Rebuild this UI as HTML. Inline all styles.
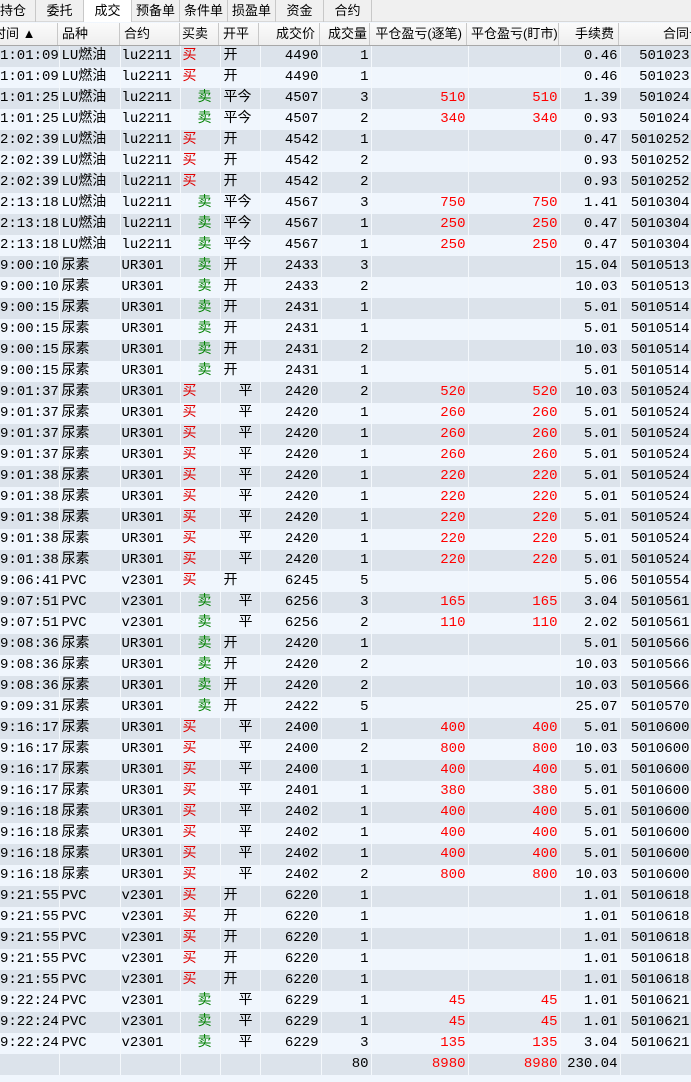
<!DOCTYPE html>
<html><head><meta charset="utf-8"><style>
*{margin:0;padding:0;box-sizing:border-box}
body{width:691px;height:1082px;overflow:hidden;background:#f0f6fd;font-family:"Liberation Mono","Noto Sans CJK SC",monospace;font-size:14px;color:#000;position:relative}
.tabs{position:absolute;left:0;top:0;width:691px;height:22px;background:#f0f0f0;border-bottom:1px solid #d8d8d8}
.tab{position:absolute;top:0;height:22px;line-height:22px;text-align:center;font-family:"Liberation Sans","Noto Sans CJK SC",sans-serif;font-size:13px;border-right:1px solid #c8c8c8;color:#000}
.tab.sel{background:#fff}
.hdr{position:absolute;left:0;top:23px;width:691px;height:23px;background:linear-gradient(#fbfbfb,#eeeeee);border-bottom:1px solid #a8a8a8}
.h{position:absolute;top:0;height:22px;line-height:22px;font-family:"Liberation Sans","Noto Sans CJK SC",sans-serif;font-size:13px;border-right:1px solid #c8c8c8;white-space:nowrap;overflow:hidden;padding:0 4px}
.r{text-align:right}
table{position:absolute;left:0;top:46px;border-collapse:collapse;table-layout:fixed;width:691px}
td{height:21px;line-height:21px;padding:0 2px;border-right:1px solid #f4f8fc;white-space:nowrap;overflow:hidden}
tr:nth-child(odd) td{background:#dce3eb}
tr:nth-child(even) td{background:#f0f6fd}
td:nth-child(1){padding:0 0 0 0;text-align:right;padding-right:1px}
td:nth-child(3){padding-left:1px}
td:nth-child(6),td:nth-child(7),td:nth-child(8),td:nth-child(9),td:nth-child(10),td:nth-child(11){text-align:right}
td:nth-child(11){padding-right:1px}
.b{color:#e00000;padding-left:2px}
.s{color:#008000;padding-left:17px}
.k{padding-left:3px}
.p{padding-left:18px}
.red{color:#f00}
</style></head><body>
<div class="tabs">
<div class="tab" style="left:0;width:36px;text-align:left">持仓</div>
<div class="tab" style="left:36px;width:48px">委托</div>
<div class="tab sel" style="left:84px;width:48px">成交</div>
<div class="tab" style="left:132px;width:48px">预备单</div>
<div class="tab" style="left:180px;width:48px">条件单</div>
<div class="tab" style="left:228px;width:48px">损盈单</div>
<div class="tab" style="left:276px;width:48px">资金</div>
<div class="tab" style="left:324px;width:48px">合约</div>
</div>
<div class="hdr">
<div class="h" style="left:0;width:58px;padding-left:0;text-indent:-7px">时间 ▲</div>
<div class="h" style="left:58px;width:62px">品种</div>
<div class="h" style="left:120px;width:60px">合约</div>
<div class="h" style="left:180px;width:39px;padding:0 2px">买卖</div>
<div class="h" style="left:219px;width:40px">开平</div>
<div class="h r" style="left:259px;width:61px">成交价</div>
<div class="h r" style="left:320px;width:50px;padding:0 2px">成交量</div>
<div class="h r" style="left:370px;width:97px">平仓盈亏(逐笔)</div>
<div class="h r" style="left:467px;width:92px">平仓盈亏(盯市)</div>
<div class="h r" style="left:559px;width:60px">手续费</div>
<div class="h" style="left:619px;width:72px;padding-left:44px;border:none">合同号</div>
</div>
<table>
<colgroup><col style="width:59px"><col style="width:61px"><col style="width:60px"><col style="width:40px"><col style="width:40px"><col style="width:61px"><col style="width:50px"><col style="width:97px"><col style="width:92px"><col style="width:60px"><col style="width:71px"></colgroup>
<tr><td>1:01:09</td><td>LU燃油</td><td>lu2211</td><td class="b">买</td><td class="k">开</td><td>4490</td><td>1</td><td></td><td></td><td>0.46</td><td>501023</td></tr>
<tr><td>1:01:09</td><td>LU燃油</td><td>lu2211</td><td class="b">买</td><td class="k">开</td><td>4490</td><td>1</td><td></td><td></td><td>0.46</td><td>501023</td></tr>
<tr><td>1:01:25</td><td>LU燃油</td><td>lu2211</td><td class="s">卖</td><td class="k">平今</td><td>4507</td><td>3</td><td class="red">510</td><td class="red">510</td><td>1.39</td><td>501024</td></tr>
<tr><td>1:01:25</td><td>LU燃油</td><td>lu2211</td><td class="s">卖</td><td class="k">平今</td><td>4507</td><td>2</td><td class="red">340</td><td class="red">340</td><td>0.93</td><td>501024</td></tr>
<tr><td>2:02:39</td><td>LU燃油</td><td>lu2211</td><td class="b">买</td><td class="k">开</td><td>4542</td><td>1</td><td></td><td></td><td>0.47</td><td>5010252</td></tr>
<tr><td>2:02:39</td><td>LU燃油</td><td>lu2211</td><td class="b">买</td><td class="k">开</td><td>4542</td><td>2</td><td></td><td></td><td>0.93</td><td>5010252</td></tr>
<tr><td>2:02:39</td><td>LU燃油</td><td>lu2211</td><td class="b">买</td><td class="k">开</td><td>4542</td><td>2</td><td></td><td></td><td>0.93</td><td>5010252</td></tr>
<tr><td>2:13:18</td><td>LU燃油</td><td>lu2211</td><td class="s">卖</td><td class="k">平今</td><td>4567</td><td>3</td><td class="red">750</td><td class="red">750</td><td>1.41</td><td>5010304</td></tr>
<tr><td>2:13:18</td><td>LU燃油</td><td>lu2211</td><td class="s">卖</td><td class="k">平今</td><td>4567</td><td>1</td><td class="red">250</td><td class="red">250</td><td>0.47</td><td>5010304</td></tr>
<tr><td>2:13:18</td><td>LU燃油</td><td>lu2211</td><td class="s">卖</td><td class="k">平今</td><td>4567</td><td>1</td><td class="red">250</td><td class="red">250</td><td>0.47</td><td>5010304</td></tr>
<tr><td>9:00:10</td><td>尿素</td><td>UR301</td><td class="s">卖</td><td class="k">开</td><td>2433</td><td>3</td><td></td><td></td><td>15.04</td><td>5010513</td></tr>
<tr><td>9:00:10</td><td>尿素</td><td>UR301</td><td class="s">卖</td><td class="k">开</td><td>2433</td><td>2</td><td></td><td></td><td>10.03</td><td>5010513</td></tr>
<tr><td>9:00:15</td><td>尿素</td><td>UR301</td><td class="s">卖</td><td class="k">开</td><td>2431</td><td>1</td><td></td><td></td><td>5.01</td><td>5010514</td></tr>
<tr><td>9:00:15</td><td>尿素</td><td>UR301</td><td class="s">卖</td><td class="k">开</td><td>2431</td><td>1</td><td></td><td></td><td>5.01</td><td>5010514</td></tr>
<tr><td>9:00:15</td><td>尿素</td><td>UR301</td><td class="s">卖</td><td class="k">开</td><td>2431</td><td>2</td><td></td><td></td><td>10.03</td><td>5010514</td></tr>
<tr><td>9:00:15</td><td>尿素</td><td>UR301</td><td class="s">卖</td><td class="k">开</td><td>2431</td><td>1</td><td></td><td></td><td>5.01</td><td>5010514</td></tr>
<tr><td>9:01:37</td><td>尿素</td><td>UR301</td><td class="b">买</td><td class="p">平</td><td>2420</td><td>2</td><td class="red">520</td><td class="red">520</td><td>10.03</td><td>5010524</td></tr>
<tr><td>9:01:37</td><td>尿素</td><td>UR301</td><td class="b">买</td><td class="p">平</td><td>2420</td><td>1</td><td class="red">260</td><td class="red">260</td><td>5.01</td><td>5010524</td></tr>
<tr><td>9:01:37</td><td>尿素</td><td>UR301</td><td class="b">买</td><td class="p">平</td><td>2420</td><td>1</td><td class="red">260</td><td class="red">260</td><td>5.01</td><td>5010524</td></tr>
<tr><td>9:01:37</td><td>尿素</td><td>UR301</td><td class="b">买</td><td class="p">平</td><td>2420</td><td>1</td><td class="red">260</td><td class="red">260</td><td>5.01</td><td>5010524</td></tr>
<tr><td>9:01:38</td><td>尿素</td><td>UR301</td><td class="b">买</td><td class="p">平</td><td>2420</td><td>1</td><td class="red">220</td><td class="red">220</td><td>5.01</td><td>5010524</td></tr>
<tr><td>9:01:38</td><td>尿素</td><td>UR301</td><td class="b">买</td><td class="p">平</td><td>2420</td><td>1</td><td class="red">220</td><td class="red">220</td><td>5.01</td><td>5010524</td></tr>
<tr><td>9:01:38</td><td>尿素</td><td>UR301</td><td class="b">买</td><td class="p">平</td><td>2420</td><td>1</td><td class="red">220</td><td class="red">220</td><td>5.01</td><td>5010524</td></tr>
<tr><td>9:01:38</td><td>尿素</td><td>UR301</td><td class="b">买</td><td class="p">平</td><td>2420</td><td>1</td><td class="red">220</td><td class="red">220</td><td>5.01</td><td>5010524</td></tr>
<tr><td>9:01:38</td><td>尿素</td><td>UR301</td><td class="b">买</td><td class="p">平</td><td>2420</td><td>1</td><td class="red">220</td><td class="red">220</td><td>5.01</td><td>5010524</td></tr>
<tr><td>9:06:41</td><td>PVC</td><td>v2301</td><td class="b">买</td><td class="k">开</td><td>6245</td><td>5</td><td></td><td></td><td>5.06</td><td>5010554</td></tr>
<tr><td>9:07:51</td><td>PVC</td><td>v2301</td><td class="s">卖</td><td class="p">平</td><td>6256</td><td>3</td><td class="red">165</td><td class="red">165</td><td>3.04</td><td>5010561</td></tr>
<tr><td>9:07:51</td><td>PVC</td><td>v2301</td><td class="s">卖</td><td class="p">平</td><td>6256</td><td>2</td><td class="red">110</td><td class="red">110</td><td>2.02</td><td>5010561</td></tr>
<tr><td>9:08:36</td><td>尿素</td><td>UR301</td><td class="s">卖</td><td class="k">开</td><td>2420</td><td>1</td><td></td><td></td><td>5.01</td><td>5010566</td></tr>
<tr><td>9:08:36</td><td>尿素</td><td>UR301</td><td class="s">卖</td><td class="k">开</td><td>2420</td><td>2</td><td></td><td></td><td>10.03</td><td>5010566</td></tr>
<tr><td>9:08:36</td><td>尿素</td><td>UR301</td><td class="s">卖</td><td class="k">开</td><td>2420</td><td>2</td><td></td><td></td><td>10.03</td><td>5010566</td></tr>
<tr><td>9:09:31</td><td>尿素</td><td>UR301</td><td class="s">卖</td><td class="k">开</td><td>2422</td><td>5</td><td></td><td></td><td>25.07</td><td>5010570</td></tr>
<tr><td>9:16:17</td><td>尿素</td><td>UR301</td><td class="b">买</td><td class="p">平</td><td>2400</td><td>1</td><td class="red">400</td><td class="red">400</td><td>5.01</td><td>5010600</td></tr>
<tr><td>9:16:17</td><td>尿素</td><td>UR301</td><td class="b">买</td><td class="p">平</td><td>2400</td><td>2</td><td class="red">800</td><td class="red">800</td><td>10.03</td><td>5010600</td></tr>
<tr><td>9:16:17</td><td>尿素</td><td>UR301</td><td class="b">买</td><td class="p">平</td><td>2400</td><td>1</td><td class="red">400</td><td class="red">400</td><td>5.01</td><td>5010600</td></tr>
<tr><td>9:16:17</td><td>尿素</td><td>UR301</td><td class="b">买</td><td class="p">平</td><td>2401</td><td>1</td><td class="red">380</td><td class="red">380</td><td>5.01</td><td>5010600</td></tr>
<tr><td>9:16:18</td><td>尿素</td><td>UR301</td><td class="b">买</td><td class="p">平</td><td>2402</td><td>1</td><td class="red">400</td><td class="red">400</td><td>5.01</td><td>5010600</td></tr>
<tr><td>9:16:18</td><td>尿素</td><td>UR301</td><td class="b">买</td><td class="p">平</td><td>2402</td><td>1</td><td class="red">400</td><td class="red">400</td><td>5.01</td><td>5010600</td></tr>
<tr><td>9:16:18</td><td>尿素</td><td>UR301</td><td class="b">买</td><td class="p">平</td><td>2402</td><td>1</td><td class="red">400</td><td class="red">400</td><td>5.01</td><td>5010600</td></tr>
<tr><td>9:16:18</td><td>尿素</td><td>UR301</td><td class="b">买</td><td class="p">平</td><td>2402</td><td>2</td><td class="red">800</td><td class="red">800</td><td>10.03</td><td>5010600</td></tr>
<tr><td>9:21:55</td><td>PVC</td><td>v2301</td><td class="b">买</td><td class="k">开</td><td>6220</td><td>1</td><td></td><td></td><td>1.01</td><td>5010618</td></tr>
<tr><td>9:21:55</td><td>PVC</td><td>v2301</td><td class="b">买</td><td class="k">开</td><td>6220</td><td>1</td><td></td><td></td><td>1.01</td><td>5010618</td></tr>
<tr><td>9:21:55</td><td>PVC</td><td>v2301</td><td class="b">买</td><td class="k">开</td><td>6220</td><td>1</td><td></td><td></td><td>1.01</td><td>5010618</td></tr>
<tr><td>9:21:55</td><td>PVC</td><td>v2301</td><td class="b">买</td><td class="k">开</td><td>6220</td><td>1</td><td></td><td></td><td>1.01</td><td>5010618</td></tr>
<tr><td>9:21:55</td><td>PVC</td><td>v2301</td><td class="b">买</td><td class="k">开</td><td>6220</td><td>1</td><td></td><td></td><td>1.01</td><td>5010618</td></tr>
<tr><td>9:22:24</td><td>PVC</td><td>v2301</td><td class="s">卖</td><td class="p">平</td><td>6229</td><td>1</td><td class="red">45</td><td class="red">45</td><td>1.01</td><td>5010621</td></tr>
<tr><td>9:22:24</td><td>PVC</td><td>v2301</td><td class="s">卖</td><td class="p">平</td><td>6229</td><td>1</td><td class="red">45</td><td class="red">45</td><td>1.01</td><td>5010621</td></tr>
<tr><td>9:22:24</td><td>PVC</td><td>v2301</td><td class="s">卖</td><td class="p">平</td><td>6229</td><td>3</td><td class="red">135</td><td class="red">135</td><td>3.04</td><td>5010621</td></tr>
<tr><td></td><td></td><td></td><td></td><td></td><td></td><td>80</td><td class="red">8980</td><td class="red">8980</td><td>230.04</td><td></td></tr>
</table>
</body></html>
